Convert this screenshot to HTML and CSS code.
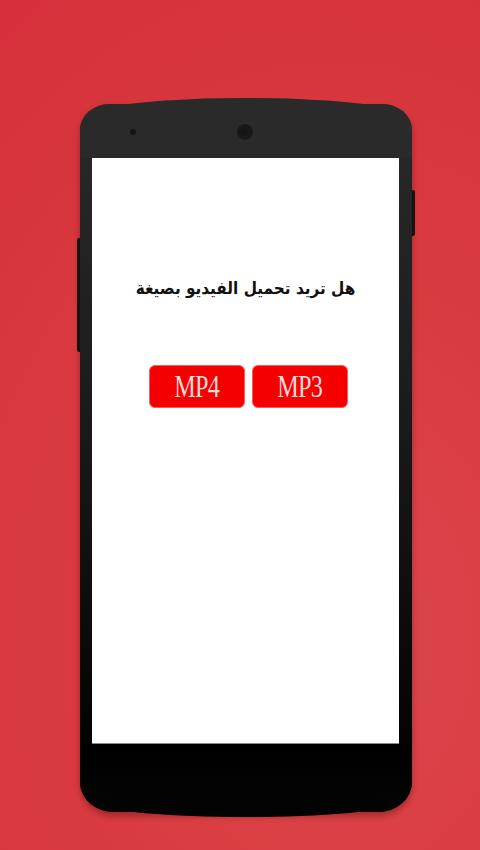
FILE: index.html
```html
<!DOCTYPE html>
<html lang="ar">
<head>
<meta charset="utf-8">
<link rel="stylesheet" href="styles.css">
</head>
<body>
<div class="phone">
  <span class="side-btn side-left"></span>
  <span class="side-btn side-right"></span>
  <div class="top-bezel">
    <span class="sensor"></span>
    <span class="camera"></span>
  </div>
  <div class="screen">
    <p class="question" dir="rtl">هل تريد تحميل الفيديو بصيغة</p>
    <div class="buttons">
      <button class="fmt"><span class="label">MP4</span></button>
      <button class="fmt"><span class="label">MP3</span></button>
    </div>
  </div>
  <div class="bottom-bezel"></div>
</div>
</body>
</html>
```
FILE: styles.css
```css
html, body {
  margin: 0;
  padding: 0;
}
body {
  width: 480px;
  height: 850px;
  overflow: hidden;
  background: radial-gradient(ellipse 120% 90% at 70% 75%, #dd474c 0%, #d93b40 45%, #d6313a 100%);
  font-family: "DejaVu Sans", sans-serif;
}
.phone {
  position: relative;
  margin: 104px 0 0 80px;
  width: 332px;
  height: 708px;
  display: flex;
  flex-direction: column;
  border-radius: 30px 30px 34px 34px / 26px 26px 30px 30px;
  background: linear-gradient(#2a2a2a 0%, #1c1c1c 40%, #080808 80%, #000 100%);
  box-shadow: 0 4px 6px rgba(60, 0, 0, 0.35);
}
.phone::before {
  content: "";
  position: absolute;
  left: 20px;
  right: 20px;
  top: -6px;
  height: 30px;
  border-radius: 50%;
  background: #2a2a2a;
}
.phone::after {
  content: "";
  position: absolute;
  left: 24px;
  right: 24px;
  bottom: -5px;
  height: 26px;
  border-radius: 50%;
  background: #030303;
}
.side-btn {
  position: absolute;
  width: 3px;
  background: #1a1010;
}
.side-left {
  left: -3px;
  top: 134px;
  height: 114px;
  border-radius: 2px 0 0 2px;
}
.side-right {
  right: -3px;
  top: 86px;
  height: 46px;
  border-radius: 0 2px 2px 0;
}
.top-bezel {
  position: relative;
  z-index: 1;
  height: 54px;
  background: #2a2a2a;
  border-radius: 30px 30px 0 0 / 26px 26px 0 0;
}
.sensor {
  position: absolute;
  left: 50px;
  top: 25px;
  width: 6px;
  height: 6px;
  border-radius: 50%;
  background: #141414;
}
.camera {
  position: absolute;
  left: 157px;
  top: 20px;
  width: 16px;
  height: 16px;
  border-radius: 50%;
  background: radial-gradient(circle at 50% 45%, #141414 0%, #181818 55%, #222 100%);
}
.screen {
  position: relative;
  z-index: 1;
  margin: 0 13px 0 12px;
  height: 585px;
  background: #fff;
  border-bottom: 1px solid #888;
  display: flex;
  flex-direction: column;
  align-items: center;
}
.question {
  margin: 118px 0 0;
  font-family: "DejaVu Sans Condensed", "DejaVu Sans", sans-serif;
  font-size: 17px;
  font-weight: bold;
  color: #111;
  line-height: 24px;
}
.buttons {
  margin: 65px 0 0 6px;
  display: flex;
  gap: 7px;
}
.fmt {
  width: 96px;
  height: 43px;
  padding: 0;
  border: 1px solid #ff5a5a;
  border-radius: 6px;
  background: #f40000;
  color: #ffd9d9;
  font-family: "Liberation Serif", serif;
  font-size: 31px;
  line-height: 40px;
}
.label {
  display: inline-block;
  transform: scaleX(0.78);
  letter-spacing: -1px;
}
.bottom-bezel {
  flex: 1;
  border-radius: 0 0 34px 34px / 0 0 30px 30px;
  background: linear-gradient(#000, #050505);
}
```
